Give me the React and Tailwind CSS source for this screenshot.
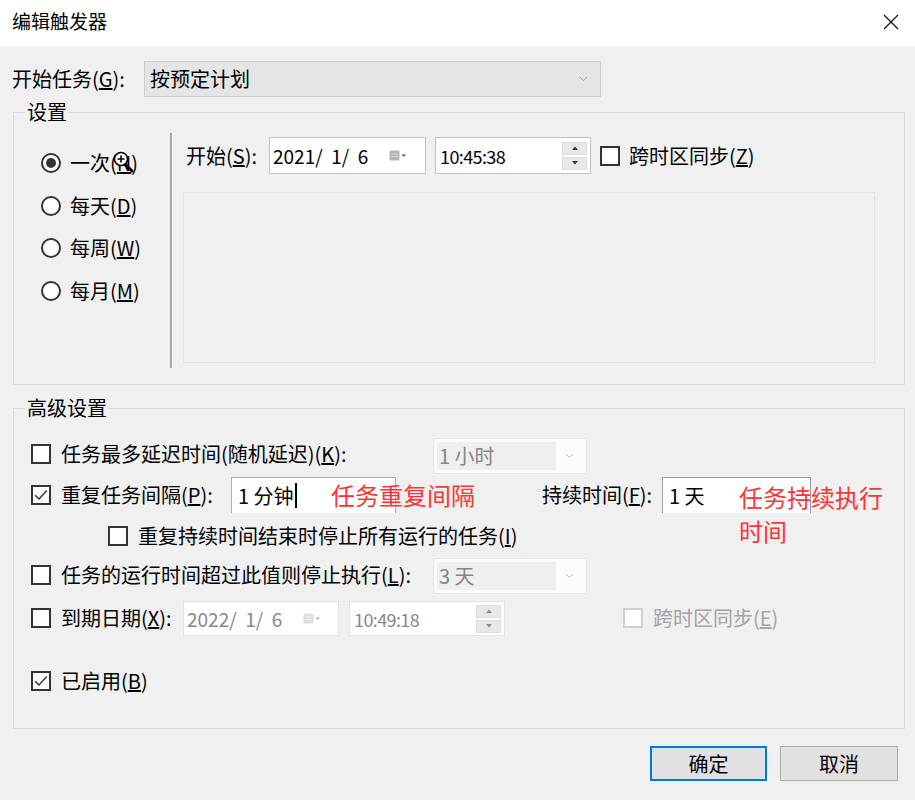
import React from "react";

const Ck = ({ checked, disabled }) => (
  <div
    className={`w-[20px] h-[20px] shrink-0 border-2 bg-white flex items-center justify-center ${
      disabled ? "border-[#cfcfcf]" : "border-[#333333]"
    }`}
  >
    {checked && (
      <svg width="16" height="16" viewBox="0 0 16 16">
        <path d="M2.2 8.2 L6 12 L13.8 3.6" fill="none" stroke="#333333" strokeWidth="1.5" />
      </svg>
    )}
  </div>
);

const Radio = ({ on }) => (
  <div className="w-[20px] h-[20px] shrink-0 rounded-full border-2 border-[#333333] bg-white flex items-center justify-center">
    {on && <div className="w-[10px] h-[10px] rounded-full bg-[#333333]" />}
  </div>
);

const Chevron = ({ color = "#9a9a9a" }) => (
  <svg width="9" height="6" viewBox="0 0 9 6">
    <path d="M0.8 0.8 L4.5 4.6 L8.2 0.8" fill="none" stroke={color} strokeWidth="1" />
  </svg>
);

const CalIcon = ({ dis }) => (
  <svg width="18" height="12" viewBox="0 0 18 12">
    <rect x="0.5" y="0.5" width="10" height="10" rx="1.5" fill={dis ? "#dddddd" : "#b4b4b4"} />
    <path d="M2 4 H9 M2 6.5 H9" stroke={dis ? "#eeeeee" : "#d6d6d6"} strokeWidth="1" />
    <path d="M12.5 4.5 L17 4.5 L14.75 7 Z" fill={dis ? "#b0b0b0" : "#555555"} />
  </svg>
);

const Spin = ({ dis }) => (
  <div className="flex flex-col gap-[2px]">
    <div className="w-[25px] h-[13px] bg-[#e8e8e8] border border-[#dddddd] flex items-center justify-center">
      <svg width="6" height="4" viewBox="0 0 6 4">
        <path d="M0 4 L3 0.5 L6 4 Z" fill={dis ? "#888888" : "#333333"} />
      </svg>
    </div>
    <div className="w-[25px] h-[13px] bg-[#e8e8e8] border border-[#dddddd] flex items-center justify-center">
      <svg width="6" height="4" viewBox="0 0 6 4">
        <path d="M0 0 L3 3.5 L6 0 Z" fill={dis ? "#888888" : "#333333"} />
      </svg>
    </div>
  </div>
);

const DateBox = ({ text, dis, w }) => (
  <div
    className={`h-full bg-white border flex items-center pl-[3px] ${
      dis ? "border-[#e2e2e2] text-[#888888]" : "border-[#c2c2c2] text-black"
    } ${w}`}
  >
    <span className="w-[116px] text-[19px] whitespace-pre">{text}</span>
    <CalIcon dis={dis} />
  </div>
);

const TimeBox = ({ text, dis, w }) => (
  <div
    className={`h-full bg-white border flex items-center justify-between pl-[4px] pr-[3px] ${
      dis ? "border-[#e2e2e2] text-[#888888]" : "border-[#c2c2c2] text-black"
    } ${w}`}
  >
    <span className="text-[18px] tracking-[-0.6px]">{text}</span>
    <Spin dis={dis} />
  </div>
);

const DisCombo = ({ text }) => (
  <div className="w-[154px] h-[36px] bg-[#fcfcfc] border border-[#e6e6e6] flex items-center p-[3px]">
    <div className="w-[119px] h-full bg-[#efefef] flex items-center pl-[2px] text-[#858585]">{text}</div>
    <div className="flex-1 flex justify-center">
      <Chevron color="#b8b8b8" />
    </div>
  </div>
);

export default function App() {
  return (
    <div className="w-[915px] h-[800px] bg-[#f0f0f0] font-['Noto_Sans_CJK_SC',sans-serif] text-[20px] leading-[26px] text-black overflow-hidden">
      {/* Title bar */}
      <div className="h-[46px] bg-white flex items-center justify-between pl-[12px] pr-[16px]">
        <span className="text-[19px] -mt-[4px]">编辑触发器</span>
        <svg width="16" height="16" viewBox="0 0 16 16" className="-mt-[2px]">
          <path d="M1 1 L15 15 M15 1 L1 15" stroke="#111111" strokeWidth="1.2" />
        </svg>
      </div>

      {/* Start task row */}
      <div className="mt-[15px] h-[36px] flex items-center pl-[12px]">
        <span className="w-[132px]">
          开始任务(<u>G</u>):
        </span>
        <div className="w-[457px] h-[36px] bg-[#e5e5e5] border border-[#cccccc] flex items-center justify-between pl-[5px] pr-[12px]">
          <span>按预定计划</span>
          <Chevron color="#a0a0a0" />
        </div>
      </div>

      {/* Settings group */}
      <fieldset className="mt-[2px] ml-[13px] w-[892px] h-[286px] border border-[#dadada]">
        <legend className="ml-[11px] px-[2px] leading-[26px]">设置</legend>
        <div className="flex">
          <div className="w-[156px] pl-[27px] pt-[16px] flex flex-col">
            <div className="relative h-[43px] flex items-center gap-[9px]">
              <Radio on />
              <span>
                一次(<u>N</u>)
              </span>
              <svg
                className="absolute left-[72px] top-[10px]"
                width="21"
                height="22"
                viewBox="0 0 21 22"
              >
                <path d="M12 13 L19 20" stroke="#000" strokeWidth="3" strokeLinecap="round" />
                <circle cx="8" cy="8" r="6.5" fill="#fff" stroke="#000" strokeWidth="1.5" />
                <path d="M8 4.5 V11.5 M4.5 8 H11.5" stroke="#000" strokeWidth="1.6" />
              </svg>
            </div>
            <div className="h-[43px] flex items-center gap-[9px]">
              <Radio />
              <span>
                每天(<u>D</u>)
              </span>
            </div>
            <div className="h-[42px] flex items-center gap-[9px]">
              <Radio />
              <span>
                每周(<u>W</u>)
              </span>
            </div>
            <div className="h-[43px] flex items-center gap-[9px]">
              <Radio />
              <span>
                每月(<u>M</u>)
              </span>
            </div>
          </div>
          <div className="mt-[8px] h-[235px] w-[3px] bg-[#a3a3a3] border-r border-white" />
          <div className="flex flex-col pl-[13px]">
            <div className="mt-[12px] h-[37px] flex items-center">
              <span className="w-[83px]">
                开始(<u>S</u>):
              </span>
              <DateBox text="2021/  1/  6" w="w-[157px]" />
              <div className="w-[9px]" />
              <TimeBox text="10:45:38" w="w-[156px]" />
              <div className="w-[9px]" />
              <Ck />
              <span className="ml-[9px]">
                跨时区同步(<u>Z</u>)
              </span>
            </div>
            <div className="ml-[-3px] mt-[18px] w-[692px] h-[171px] border border-[#e2e2e2]" />
          </div>
        </div>
      </fieldset>

      {/* Advanced settings group */}
      <fieldset className="mt-[10px] ml-[13px] w-[892px] h-[334px] border border-[#dadada]">
        <legend className="ml-[11px] px-[2px] leading-[26px]">高级设置</legend>
        <div className="flex flex-col">
          <div className="mt-[15px] h-[36px] flex items-center pl-[17px]">
            <Ck />
            <span className="ml-[10px] w-[372px]">
              任务最多延迟时间(随机延迟)(<u>K</u>):
            </span>
            <div className="mt-[4px]">
              <DisCombo text="1 小时" />
            </div>
          </div>

          <div className="relative mt-[5px] h-[36px] flex items-center pl-[17px]">
            <Ck checked />
            <span className="ml-[10px] w-[170px]">
              重复任务间隔(<u>P</u>):
            </span>
            <div className="w-[165px] h-[36px] bg-white border-t border-x border-[#a9b4c0] flex items-center pl-[6px]">
              <span>1 分钟</span>
              <div className="ml-[1px] w-[2px] h-[25px] bg-black" />
            </div>
            <span className="ml-[146px] w-[120px]">
              持续时间(<u>F</u>):
            </span>
            <div className="w-[149px] h-[36px] bg-white border-t border-x border-[#9a9a9a] flex items-center pl-[6px]">
              1 天
            </div>
            <span className="absolute left-[317px] top-[1px] text-[24px] leading-[34px] text-[#ff3333]">
              任务重复间隔
            </span>
            <span className="absolute left-[725px] top-[3px] text-[24px] leading-[34px] text-[#ff3333]">
              任务持续执行
              <br />
              时间
            </span>
          </div>

          <div className="mt-[5px] h-[36px] flex items-center pl-[94px]">
            <Ck />
            <span className="ml-[10px]">
              重复持续时间结束时停止所有运行的任务(<u>I</u>)
            </span>
          </div>

          <div className="mt-[3px] h-[36px] flex items-center pl-[17px]">
            <Ck />
            <span className="ml-[10px] w-[372px]">
              任务的运行时间超过此值则停止执行(<u>L</u>):
            </span>
            <div className="mt-[2px]">
              <DisCombo text="3 天" />
            </div>
          </div>

          <div className="mt-[7px] h-[36px] flex items-center pl-[17px]">
            <Ck />
            <span className="ml-[10px] w-[122px]">
              到期日期(<u>X</u>):
            </span>
            <div className="h-[35px] flex items-center mt-[1px]">
              <DateBox text="2022/  1/  6" dis w="w-[156px]" />
              <div className="w-[10px]" />
              <TimeBox text="10:49:18" dis w="w-[156px]" />
            </div>
            <div className="ml-[118px] flex items-center">
              <Ck disabled />
              <span className="ml-[10px] text-[#a3a3a3]">
                跨时区同步(<u>E</u>)
              </span>
            </div>
          </div>

          <div className="mt-[27px] h-[36px] flex items-center pl-[17px]">
            <Ck checked />
            <span className="ml-[10px]">
              已启用(<u>B</u>)
            </span>
          </div>
        </div>
      </fieldset>

      {/* Buttons */}
      <div className="mt-[17px] flex justify-end gap-[13px] pr-[17px]">
        <button className="w-[117px] h-[35px] bg-[#e1e1e1] border-2 border-[#0078d7] flex items-center justify-center">
          确定
        </button>
        <button className="w-[118px] h-[35px] bg-[#e1e1e1] border border-[#adadad] flex items-center justify-center">
          取消
        </button>
      </div>
    </div>
  );
}
